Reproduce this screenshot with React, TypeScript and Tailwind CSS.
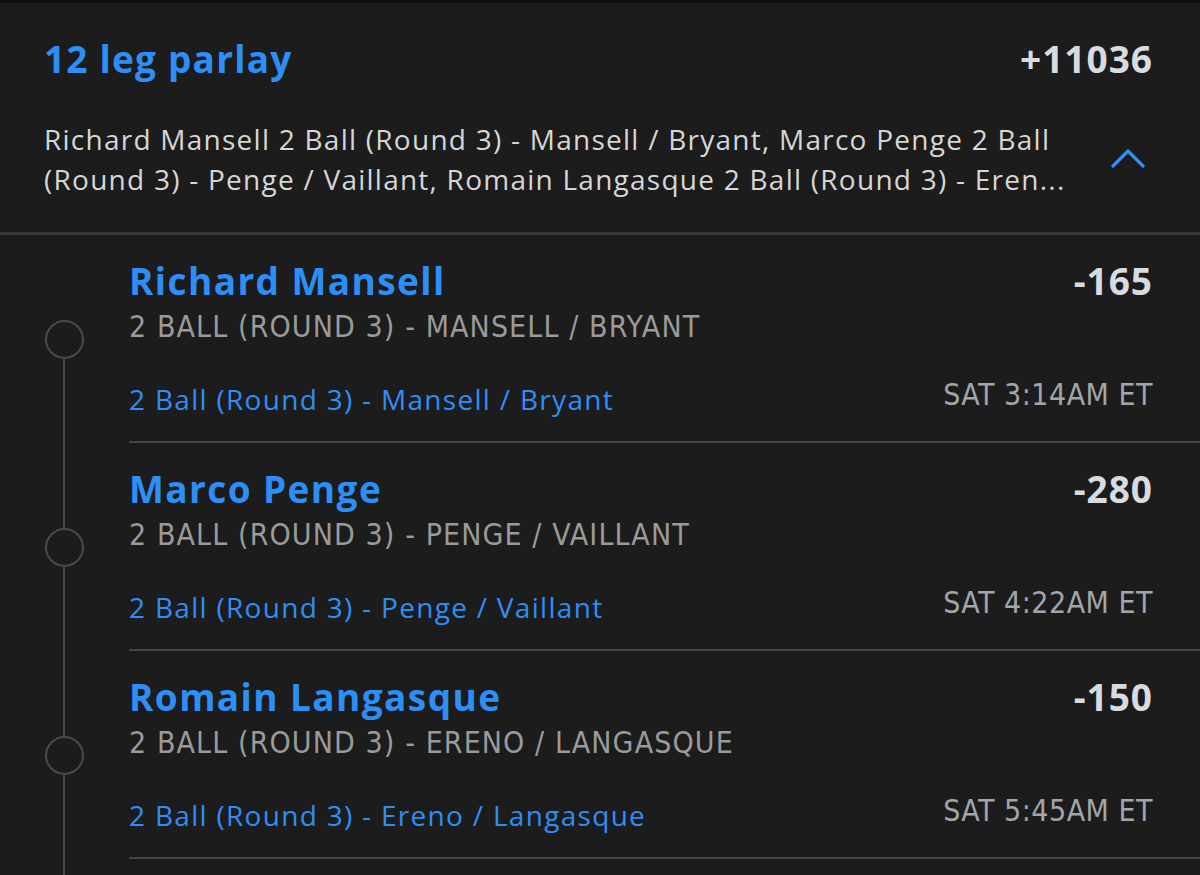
interface Leg {
  player: string;
  odds: string;
  market: string;
  event: string;
  time: string;
}

const legs: Leg[] = [
  {
    player: "Richard Mansell",
    odds: "-165",
    market: "2 Ball (Round 3) - Mansell / Bryant",
    event: "2 Ball (Round 3) - Mansell / Bryant",
    time: "SAT 3:14AM ET",
  },
  {
    player: "Marco Penge",
    odds: "-280",
    market: "2 Ball (Round 3) - Penge / Vaillant",
    event: "2 Ball (Round 3) - Penge / Vaillant",
    time: "SAT 4:22AM ET",
  },
  {
    player: "Romain Langasque",
    odds: "-150",
    market: "2 Ball (Round 3) - Ereno / Langasque",
    event: "2 Ball (Round 3) - Ereno / Langasque",
    time: "SAT 5:45AM ET",
  },
];

const sans = "font-['Open_Sans','Noto_Sans',sans-serif]";
const narrow = "font-['Liberation_Sans_Narrow','DejaVu_Sans_Condensed','Roboto',sans-serif]";

function LegRow({ leg, first }: { leg: Leg; first: boolean }) {
  return (
    <div className="flex h-[208px]">
      {/* timeline */}
      <div className="flex w-[129px] shrink-0 flex-col items-center pr-[1px]">
        <div className={`w-[2px] flex-1 ${first ? "bg-transparent" : "bg-[#464646]"}`} />
        <div className="h-[39px] w-[39px] rounded-full border-2 border-[#4a4a4a]" />
        <div className="w-[2px] flex-1 bg-[#464646]" />
      </div>

      <div className="flex flex-1 flex-col border-b-2 border-[#444444] pr-[47px] pt-[24px]">
        <div className="flex items-start justify-between">
          <div className={`${sans} text-[37px] font-bold leading-[1.2] tracking-[1.4px] text-[#2d8ff6]`}>
            {leg.player}
          </div>
          <div className={`${sans} text-[37px] font-bold leading-[1.2] tracking-[1px] text-[#d8dce1]`}>
            {leg.odds}
          </div>
        </div>
        <div className={`${narrow} mt-[8px] text-[30px] uppercase leading-none tracking-[1.1px] text-[#9a9a9a]`}>
          {leg.market}
        </div>
        <div className="mt-[37px] flex items-center justify-between">
          <div className={`${sans} text-[28px] leading-[40px] tracking-[1.3px] text-[#2d8ff6]`}>{leg.event}</div>
          <div className={`${narrow} -mt-[8px] text-[30px] leading-none tracking-[0.5px] text-[#a2a5a9]`}>
            {leg.time}
          </div>
        </div>
      </div>
    </div>
  );
}

export default function App() {
  return (
    <div className="flex h-[875px] w-[1200px] flex-col overflow-hidden bg-[#1c1c1c]">
      <div className="h-[3px] shrink-0 bg-[#0e0e0e]" />

      <div className="shrink-0 border-b-[3px] border-[#3a3a3a] pb-[33px] pl-[44px] pr-[47px] pt-[34px]">
        <div className="flex items-start justify-between">
          <div className={`${sans} text-[37px] font-bold leading-[1.2] tracking-[1.2px] text-[#2d8ff6]`}>
            12 leg parlay
          </div>
          <div className={`${sans} text-[37px] font-bold leading-[1.2] tracking-[1px] text-[#d8dce1]`}>
            +11036
          </div>
        </div>
        <div className="mt-[38px] flex items-center justify-between">
          <div className={`${sans} text-[28px] leading-[40px] tracking-[1.25px] text-[#d6d6d6]`}>
            <div className="whitespace-nowrap">
              Richard Mansell 2 Ball (Round 3) - Mansell / Bryant, Marco Penge 2 Ball
            </div>
            <div className="whitespace-nowrap">
              (Round 3) - Penge / Vaillant, Romain Langasque 2 Ball (Round 3) - Eren...
            </div>
          </div>
          <svg width="34" height="20" viewBox="0 0 34 20" className="mr-[8px]" fill="none">
            <polyline
              points="2,17 17,2 32,17"
              stroke="#2d8ff6"
              strokeWidth="3.2"
              strokeLinecap="round"
              strokeLinejoin="round"
            />
          </svg>
        </div>
      </div>

      {legs.map((leg, i) => (
        <LegRow key={leg.player} leg={leg} first={i === 0} />
      ))}

      {/* timeline continues below the visible legs */}
      <div className="flex flex-1">
        <div className="flex w-[129px] shrink-0 justify-center pr-[1px]">
          <div className="w-[2px] bg-[#464646]" />
        </div>
      </div>
    </div>
  );
}
